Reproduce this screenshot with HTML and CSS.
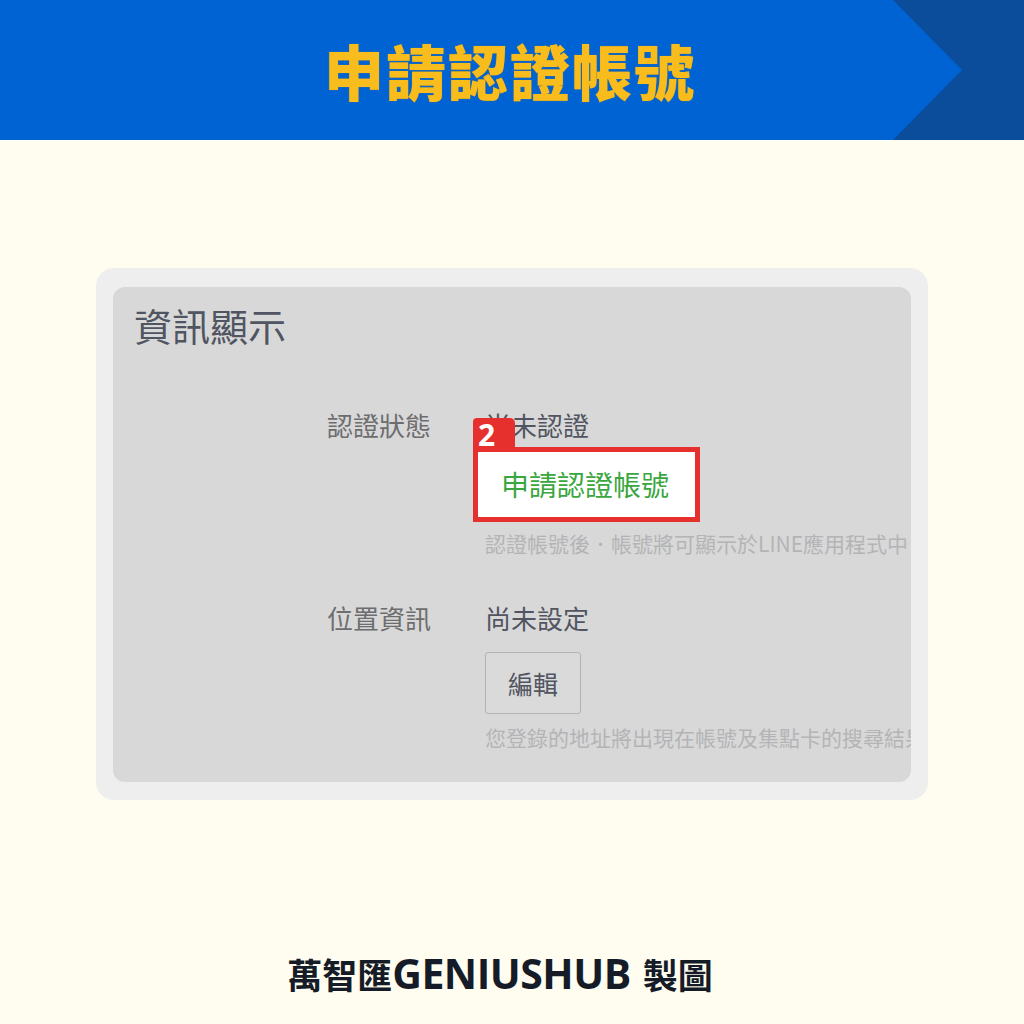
FILE: index.html
```html
<!DOCTYPE html>
<html lang="zh-Hant">
<head>
<meta charset="utf-8">
<title>申請認證帳號</title>
<link rel="stylesheet" href="styles.css">
</head>
<body>
<header class="banner">
  <div class="banner-light"></div>
  <h1 class="banner-title">申請認證帳號</h1>
</header>
<main class="stage">
  <div class="shot-frame">
    <div class="shot">
      <h2 class="shot-title">資訊顯示</h2>
      <div class="row row-first">
        <div class="label">認證狀態</div>
        <div class="value">
          <div class="value-text">尚未認證</div>
          <div class="apply-wrap">
            <span class="badge">2</span>
            <div class="apply-box">申請認證帳號</div>
          </div>
          <div class="hint">認證帳號後．帳號將可顯示於LINE應用程式中</div>
        </div>
      </div>
      <div class="row row-second">
        <div class="label">位置資訊</div>
        <div class="value">
          <div class="value-text">尚未設定</div>
          <div class="edit-btn">編輯</div>
          <div class="hint hint-second">您登錄的地址將出現在帳號及集點卡的搜尋結果</div>
        </div>
      </div>
    </div>
  </div>
</main>
<footer class="credit">
  <span class="credit-cjk">萬智匯</span><span class="credit-latin">GENIUSHUB</span><span class="credit-cjk credit-tail">製圖</span>
</footer>
</body>
</html>
```

FILE: styles.css
```css
html, body {
  margin: 0;
  padding: 0;
}
body {
  width: 1024px;
  height: 1024px;
  background: #fffdf0;
  font-family: "Noto Sans CJK TC", "Noto Sans", sans-serif;
  overflow: hidden;
}
.banner {
  position: relative;
  height: 140px;
  background: #0b4c9b;
  display: flex;
  align-items: center;
  justify-content: center;
}
.banner-light {
  position: absolute;
  inset: 0;
  background: #0063d3;
  clip-path: polygon(0 0, 893px 0, 962px 70px, 893px 140px, 0 140px);
}
.banner-title {
  position: relative;
  margin: 0 0 0 -4px;
  font-size: 60px;
  font-weight: 900;
  letter-spacing: 2px;
  line-height: 1;
  color: #f8bd1c;
  text-shadow: 0 0 1px #b98a1a;
}
.stage {
  padding-top: 128px;
  padding-left: 96px;
}
.shot-frame {
  width: 798px;
  height: 495px;
  padding: 19px 17px 18px 17px;
  background: #eeeeee;
  border-radius: 18px;
}
.shot {
  height: 100%;
  background: #d8d8d8;
  border-radius: 12px;
  overflow: hidden;
  padding-top: 15px;
  box-sizing: border-box;
}
.shot-title {
  margin: 0 0 0 21px;
  font-size: 38px;
  line-height: 46px;
  font-weight: 400;
  color: #505562;
}
.row {
  display: flex;
  padding-left: 214px;
}
.row-first {
  margin-top: 62px;
}
.row-second {
  margin-top: 46px;
}
.label {
  width: 158px;
  flex: none;
  font-size: 26px;
  line-height: 30px;
  color: #6d6d6f;
}
.value {
  flex: none;
  width: 460px;
}
.value-text {
  font-size: 26px;
  line-height: 30px;
  color: #515561;
}
.apply-wrap {
  position: relative;
  margin: 7px 0 0 -12px;
  width: 227px;
}
.badge {
  position: absolute;
  left: 0;
  top: -29px;
  width: 42px;
  height: 31px;
  background: #e6302e;
  border-radius: 4px 5px 0 0;
  color: #ffffff;
  font-family: "Open Sans", "Noto Sans", sans-serif;
  font-weight: 700;
  font-size: 30px;
  line-height: 34px;
  text-indent: 5px;
}
.apply-box {
  box-sizing: border-box;
  height: 75px;
  border: 5px solid #e6302e;
  background: #ffffff;
  color: #3aa640;
  font-size: 28px;
  line-height: 65px;
  padding-left: 23px;
  white-space: nowrap;
}
.hint {
  margin-top: 7px;
  font-size: 21px;
  line-height: 28px;
  color: #b4b4b6;
  white-space: nowrap;
}
.hint-second {
  margin-top: 9px;
}
.edit-btn {
  margin-top: 19px;
  box-sizing: border-box;
  width: 96px;
  height: 62px;
  border: 1px solid #b3b3b3;
  border-radius: 3px;
  background: #dadada;
  font-size: 25px;
  line-height: 60px;
  text-align: center;
  color: #515561;
}
.credit {
  margin-top: 148px;
  display: flex;
  justify-content: center;
  align-items: baseline;
  color: #151b27;
  padding-right: 24px;
}
.credit-cjk {
  font-family: "Noto Sans CJK TC", sans-serif;
  font-weight: 700;
  font-size: 35px;
  line-height: 50px;
}
.credit-latin {
  font-family: "Open Sans", "Noto Sans", sans-serif;
  font-weight: 700;
  font-size: 41px;
  line-height: 50px;
  letter-spacing: -0.5px;
}
.credit-tail {
  margin-left: 12px;
}
```
